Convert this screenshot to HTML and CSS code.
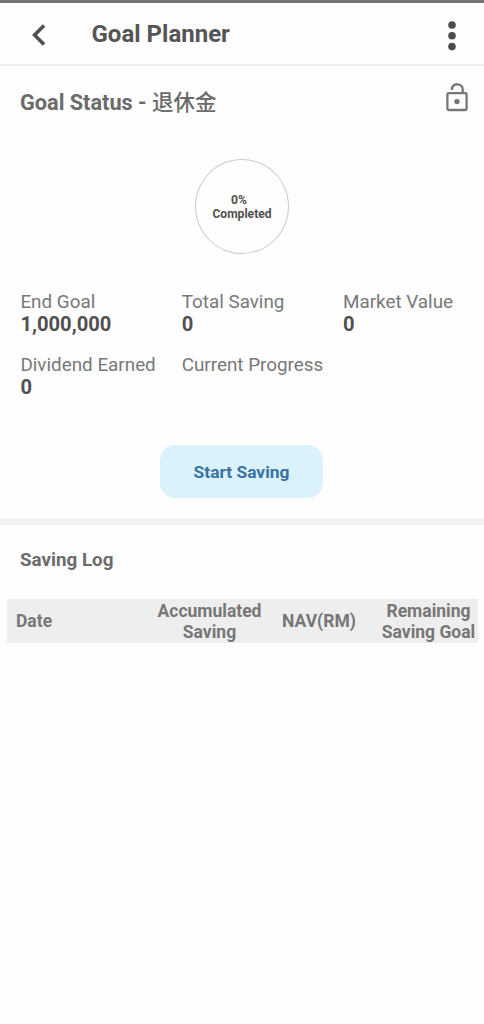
FILE: index.html
```html
<!DOCTYPE html>
<html lang="en">
<head>
<meta charset="utf-8">
<title>Goal Planner</title>
<link rel="stylesheet" href="styles.css">
</head>
<body>
<header class="app-bar">
  <svg class="back" viewBox="0 0 14 22"><path d="M12 1.6 L2.6 11 L12 20.4"/></svg>
  <h1 class="title">Goal Planner</h1>
  <svg class="more" viewBox="0 0 8 30"><circle cx="4" cy="4" r="3.8"/><circle cx="4" cy="14.8" r="3.8"/><circle cx="4" cy="25.6" r="3.8"/></svg>
</header>
<main>
  <section class="status">
    <div class="status-head">
      <h2 class="heading goal-name">Goal Status - <span class="cjk">退休金</span></h2>
      <svg class="lock" viewBox="0 0 24 30"><rect x="2.4" y="11.2" width="19.2" height="16.8" rx="1.2"/><path d="M6.9 8 V7.2 C6.9 0.6 17.7 0.6 17.7 7.4 V11"/><circle class="lock-dot" cx="12" cy="19.6" r="2.7"/></svg>
    </div>
    <div class="ring"><span class="percent">0%</span><span>Completed</span></div>
    <dl class="stats">
      <div class="stat"><dt>End Goal</dt><dd>1,000,000</dd></div>
      <div class="stat"><dt>Total Saving</dt><dd>0</dd></div>
      <div class="stat"><dt>Market Value</dt><dd>0</dd></div>
      <div class="stat"><dt>Dividend Earned</dt><dd>0</dd></div>
      <div class="stat"><dt>Current Progress</dt></div>
    </dl>
    <button class="start">Start Saving</button>
  </section>
  <section class="log">
    <h2 class="heading log-title">Saving Log</h2>
    <div class="log-head">
      <span class="date">Date</span>
      <span>Accumulated<br>Saving</span>
      <span>NAV(RM)</span>
      <span>Remaining<br>Saving Goal</span>
    </div>
  </section>
</main>
</body>
</html>
```
FILE: styles.css
```css
* { box-sizing: border-box; }
body {
  margin: 0;
  min-height: 1024px;
  background: #fefefe;
  color: #6b6b6b;
  font-family: Roboto, "Noto Sans CJK SC", sans-serif;
}
h1, h2, dl, dd { margin: 0; }
.app-bar {
  display: flex;
  align-items: center;
  height: 66px;
  padding: 3px 28.5px 0 32px;
  border-top: 3px solid #757575;
  border-bottom: 2px solid #efefef;
}
.back { width: 14px; height: 22px; margin-top: -1px; fill: none; stroke: #505050; stroke-width: 3.6; }
.title { margin: -3px auto 0 45.5px; color: #555; font-size: 24px; font-weight: 700; line-height: 30px; }
.more { width: 8px; height: 30px; margin-top: 2px; fill: #4c4c4c; }
.status { height: 459px; border-bottom: 7px solid #f2f2f2; }
.status-head {
  display: flex;
  justify-content: space-between;
  height: 93px;
  padding: 15px 15px 0 20px;
}
.heading { font-size: 18.8px; font-weight: 700; line-height: 24px; }
.goal-name { padding-top: 9px; font-size: 21.7px; }
.cjk { font-family: "Noto Sans CJK SC", sans-serif; font-size: 21.5px; font-weight: 500; line-height: 1; }
.lock { width: 24px; height: 30px; margin-top: 1px; fill: none; stroke: #777; stroke-width: 2.3; }
.lock .lock-dot { fill: #747474; stroke: none; }
.ring {
  display: flex;
  flex-direction: column;
  align-items: center;
  justify-content: center;
  width: 94px;
  height: 95px;
  margin: 0 auto;
  border: 1px solid #cbcbcb;
  border-radius: 50%;
  color: #505050;
  font-size: 12.1px;
  font-weight: 700;
  line-height: 14px;
}
.percent { margin-right: 6px; }
.stats {
  display: grid;
  grid-template-columns: repeat(3, 161.3px);
  grid-auto-rows: 63px;
  height: 155px;
  margin: 36px 0 0 20.4px;
}
.stat { white-space: nowrap; }
dt { padding-top: 1px; font-size: 18.85px; line-height: 22px; color: #787878; }
dd { font-size: 20.2px; font-weight: 700; line-height: 23px; color: #505050; }
.start {
  display: block;
  width: 163px;
  height: 53px;
  margin: 0 0 0 160px;
  padding: 1px 0 0;
  border: 0;
  border-radius: 15px;
  background: #dbf2fd;
  color: #3873a2;
  font: 700 17.4px/52px Roboto, sans-serif;
}
.log-title { padding: 23px 20px 0; }
.log-head {
  display: grid;
  grid-template-columns: 148px 109px 110px 109px;
  align-items: center;
  width: 471px;
  height: 44px;
  margin: 27px 0 0 7px;
  padding-top: 1px;
  background: #eee;
  color: #777;
  font-size: 17.5px;
  font-weight: 700;
  line-height: 21px;
  text-align: center;
  white-space: nowrap;
}
.date { padding-left: 9px; text-align: left; }
```
